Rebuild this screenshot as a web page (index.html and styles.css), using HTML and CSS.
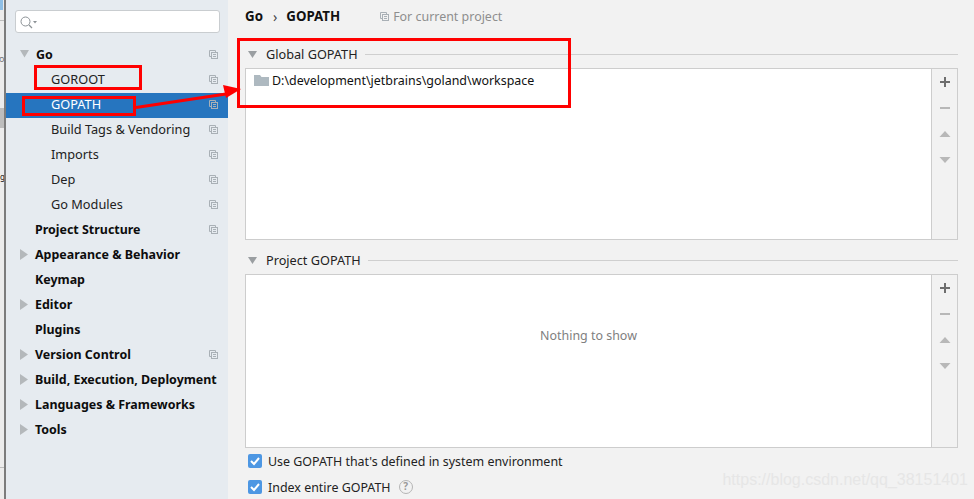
FILE: index.html
```html
<!DOCTYPE html>
<html lang="en">
<head>
<meta charset="utf-8">
<title>GOPATH settings</title>
<link rel="stylesheet" href="styles.css">
</head>
<body>
<svg width="0" height="0" class="defs">
  <defs>
    <g id="copy"><path d="M1.500 1.500h6v2M1.500 1.500v6h2" fill="none" stroke="#a9b0b6"/><rect x="3.500" y="3.500" width="6" height="6" fill="none" stroke="#a9b0b6"/><path d="M5 5.500h3M5 7.500h3" stroke="#a9b0b6"/></g>
    <path id="tri-r" d="M0 0l8 5.500-8 5.500z" fill="#b4b8bb"/>
    <path id="tri-d" d="M0 0h9l-4.500 7z" fill="#9a9ea1"/>
    <path id="tri-dl" d="M0 0h9l-4.500 7.500z" fill="#b4b8bb"/>
  </defs>
</svg>
<div class="strip"><span class="strip-blue"></span><span class="strip-line strip-l1"></span><span class="strip-o">o</span><span class="strip-gray"></span><span class="strip-g">g</span><span class="strip-line strip-l2"></span></div>
<aside class="sidebar">
  <div class="search">
    <svg class="search-icon" width="18" height="14" viewBox="0 0 18 14"><circle cx="5.500" cy="5.500" r="4.500" fill="none" stroke="#8c9296"/><path d="M9 9l3 3" stroke="#8c9296" stroke-width="1.300"/><path d="M13 5h4l-2 2.500z" fill="#8c9296"/></svg>
  </div>
  <ul class="tree">
    <li class="row bold"><svg class="arrow" width="9" height="8"><use href="#tri-dl"/></svg><span>Go</span><svg class="copy" width="11" height="11"><use href="#copy"/></svg></li>
    <li class="row sub"><span>GOROOT</span><svg class="copy" width="11" height="11"><use href="#copy"/></svg></li>
    <li class="row sub selected"><span>GOPATH</span><svg class="copy" width="11" height="11"><use href="#copy"/></svg></li>
    <li class="row sub"><span>Build Tags &amp; Vendoring</span><svg class="copy" width="11" height="11"><use href="#copy"/></svg></li>
    <li class="row sub"><span>Imports</span><svg class="copy" width="11" height="11"><use href="#copy"/></svg></li>
    <li class="row sub"><span>Dep</span><svg class="copy" width="11" height="11"><use href="#copy"/></svg></li>
    <li class="row sub"><span>Go Modules</span><svg class="copy" width="11" height="11"><use href="#copy"/></svg></li>
    <li class="row bold"><span class="noarrow">Project Structure</span><svg class="copy" width="11" height="11"><use href="#copy"/></svg></li>
    <li class="row bold"><svg class="arrow" width="8" height="11"><use href="#tri-r"/></svg><span>Appearance &amp; Behavior</span></li>
    <li class="row bold"><span class="noarrow">Keymap</span></li>
    <li class="row bold"><svg class="arrow" width="8" height="11"><use href="#tri-r"/></svg><span>Editor</span></li>
    <li class="row bold"><span class="noarrow">Plugins</span></li>
    <li class="row bold"><svg class="arrow" width="8" height="11"><use href="#tri-r"/></svg><span>Version Control</span><svg class="copy" width="11" height="11"><use href="#copy"/></svg></li>
    <li class="row bold"><svg class="arrow" width="8" height="11"><use href="#tri-r"/></svg><span>Build, Execution, Deployment</span></li>
    <li class="row bold"><svg class="arrow" width="8" height="11"><use href="#tri-r"/></svg><span>Languages &amp; Frameworks</span></li>
    <li class="row bold"><svg class="arrow" width="8" height="11"><use href="#tri-r"/></svg><span>Tools</span></li>
  </ul>
</aside>
<main class="main">
  <header class="crumbs">
    <b>Go</b><span class="chev">›</span><b>GOPATH</b>
    <span class="scope"><svg width="11" height="11"><use href="#copy"/></svg>For current project</span>
  </header>
  <section class="group first">
    <div class="group-title"><svg width="9" height="7"><use href="#tri-d"/></svg><span>Global GOPATH</span><i></i></div>
    <div class="panel panel-global">
      <div class="list">
        <div class="path"><svg width="15" height="13" viewBox="0 0 15 13"><path d="M0 1h6l1.500 2H15v9H0z" fill="#aeb9c0"/></svg>D:\development\jetbrains\goland\workspace</div>
      </div>
      <div class="tools">
        <svg width="12" height="12" viewBox="0 0 12 12"><path d="M5 1h2v4h4v2H7v4H5V7H1V5h4z" fill="#6e6e6e"/></svg>
        <svg width="12" height="12" viewBox="0 0 12 12"><path d="M1 5h10v2H1z" fill="#b8b8b8"/></svg>
        <svg width="12" height="12" viewBox="0 0 12 12"><path d="M6 3l5.500 6H.5z" fill="#b8b8b8"/></svg>
        <svg width="12" height="12" viewBox="0 0 12 12"><path d="M.5 3h11L6 9z" fill="#b8b8b8"/></svg>
      </div>
    </div>
  </section>
  <section class="group">
    <div class="group-title"><svg width="9" height="7"><use href="#tri-d"/></svg><span>Project GOPATH</span><i></i></div>
    <div class="panel panel-project">
      <div class="list empty">Nothing to show</div>
      <div class="tools">
        <svg width="12" height="12" viewBox="0 0 12 12"><path d="M5 1h2v4h4v2H7v4H5V7H1V5h4z" fill="#6e6e6e"/></svg>
        <svg width="12" height="12" viewBox="0 0 12 12"><path d="M1 5h10v2H1z" fill="#b8b8b8"/></svg>
        <svg width="12" height="12" viewBox="0 0 12 12"><path d="M6 3l5.500 6H.5z" fill="#b8b8b8"/></svg>
        <svg width="12" height="12" viewBox="0 0 12 12"><path d="M.5 3h11L6 9z" fill="#b8b8b8"/></svg>
      </div>
    </div>
  </section>
  <label class="check"><span class="box"><svg width="14" height="14" viewBox="0 0 14 14"><path d="M3 7l3 3 5-6" fill="none" stroke="#fff" stroke-width="2"/></svg></span>Use GOPATH that's defined in system environment</label>
  <label class="check"><span class="box"><svg width="14" height="14" viewBox="0 0 14 14"><path d="M3 7l3 3 5-6" fill="none" stroke="#fff" stroke-width="2"/></svg></span>Index entire GOPATH<span class="help">?</span></label>
  <div class="watermark">https://blog.csdn.net/qq_38151401</div>
</main>
<div class="mark mark-goroot"></div>
<div class="mark mark-gopath"></div>
<div class="mark mark-global"></div>
<svg class="arrow-overlay" width="974" height="499" viewBox="0 0 974 499"><path d="M136 107.500L226 94" stroke="#f00" stroke-width="3" fill="none"/><path d="M241 89L223 85 226 98z" fill="#f00"/></svg>
</body>
</html>
```
FILE: styles.css
```css
* { box-sizing: border-box; }
html, body { margin: 0; height: 100%; }
body {
  width: 974px; height: 499px; overflow: hidden; position: relative;
  display: flex; background: #f2f2f2; color: #1a1a1a;
  font-family: "Noto Sans", "Open Sans", sans-serif; font-size: 12.450px;
}
.defs { position: absolute; }
.strip { width: 6px; flex: none; background: #ececec; border-right: 2px solid #7c7c7c; position: relative; overflow: hidden; }
.strip-blue { position: absolute; left: 0; top: 0; width: 3px; height: 10px; background: #8fbfe6; }
.strip-line { position: absolute; left: 0; width: 5px; height: 1px; background: #bdbdbd; }
.strip-l1 { top: 20px; }
.strip-l2 { top: 467px; }
.strip-gray { position: absolute; left: 0; top: 108px; width: 5px; height: 20px; background: #bdbdbd; }
.strip-o { position: absolute; left: -1px; top: 52px; font-size: 9px; line-height: 14px; color: #777; }
.strip-g { position: absolute; left: 0; top: 170px; font-size: 8px; line-height: 14px; color: #111; }
.sidebar { width: 222px; flex: none; background: #e6ebf0; padding-top: 10px; }
.search { margin: 0 8px 0 9px; height: 23px; background: #fff; border: 1px solid #c9cdd0; border-radius: 3px; padding: 5px 0 0 4px; display: flex; }
.tree { list-style: none; margin: 10px 0 0; padding: 0; }
.row { height: 25px; display: flex; align-items: center; padding: 0 10px 3px 14px; position: relative; white-space: nowrap; color: #111; }
.row.bold { font-weight: 700; color: #0d0d0d; }
.row.sub { padding-left: 45px; color: #222; font-size: 12.750px; }
.row.selected { background: #2675bf; color: #fff; }
.arrow { flex: none; margin-right: 7px; }
.noarrow { margin-left: 15px; }
.copy { position: absolute; right: 9px; top: 6px; }
.main { flex: 1; padding: 0 16px 0 17px; position: relative; min-width: 0; }
.crumbs { height: 32px; display: flex; align-items: center; color: #111; }
.crumbs b { font-size: 13.300px; }
.chev { margin: 0 9px 0 10px; font-size: 14px; color: #444; }
.scope { display: flex; align-items: center; gap: 3px; color: #8e8e8e; margin-left: 39px; }
.group-title { height: 22px; margin-bottom: 3px; display: flex; align-items: center; color: #222; font-size: 12.700px; }
.group-title svg { margin: 0 9px 0 3px; flex: none; }
.group-title i { flex: 1; height: 1px; background: #cfcfcf; margin-left: 7px; }
.group { margin-top: 9px; }
.group.first { margin-top: 11px; }
.panel { display: flex; background: #fff; border: 1px solid #cdcdcd; }
.panel-global { height: 172px; }
.panel-project { height: 174px; }
.list { flex: 1; min-width: 0; }
.path { display: flex; align-items: center; gap: 3px; padding: 0 0 0 8px; height: 22px; color: #111; }
.empty { display: flex; align-items: center; justify-content: center; color: #808080; padding-bottom: 51px; }
.tools { width: 26px; flex: none; background: #f2f2f2; border-left: 1px solid #cdcdcd; display: flex; flex-direction: column; align-items: center; padding-top: 7px; gap: 14px; }
.check { display: flex; align-items: center; height: 26px; color: #222; }
.box { width: 14px; height: 14px; background: #4d97e3; border-radius: 2px; margin: 0 6px 0 3px; flex: none; display: flex; }
.help { width: 14px; height: 14px; border: 1.500px solid #b5b5b5; border-radius: 50%; color: #999; font-size: 10px; font-weight: 700; line-height: 11px; text-align: center; margin-left: 8px; }
.watermark { position: absolute; right: 6px; top: 470px; color: #e6e6e6; font: 16px/20px "Liberation Sans", sans-serif; }
.mark { position: absolute; border: 3px solid #f00; }
.mark-goroot { left: 34px; top: 65px; width: 108px; height: 25px; }
.mark-gopath { left: 22px; top: 96px; width: 114px; height: 20px; }
.mark-global { left: 237px; top: 38px; width: 334px; height: 70px; }
.arrow-overlay { position: absolute; left: 0; top: 0; pointer-events: none; }
```
